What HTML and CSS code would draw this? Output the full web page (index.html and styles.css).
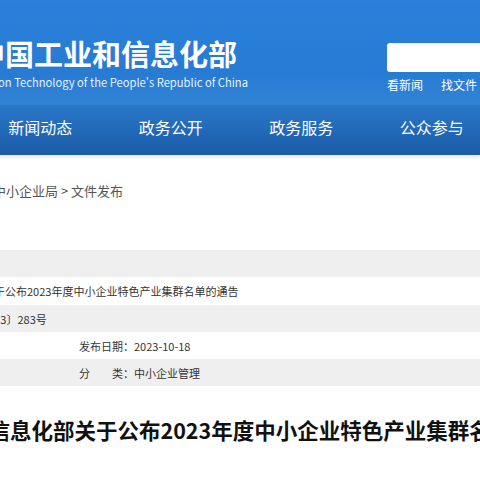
FILE: index.html
```html
<!DOCTYPE html>
<html lang="zh-CN">
<head>
<meta charset="UTF-8">
<meta name="viewport" content="width=device-width, initial-scale=1.0">
<title>工业和信息化部 - 文件发布</title>
<link rel="stylesheet" href="styles.css">
</head>
<body>
<div class="header">
  <div class="brand">
    <div class="brand-name">中国工业和信息化部</div>
    <div class="brand-en">Ministry of Industry and Information Technology of the People's Republic of China</div>
  </div>
  <div class="search">
    <div class="search-box"></div>
    <div class="search-links">
      <a href="#">看新闻</a>
      <a href="#">找文件</a>
    </div>
  </div>
</div>

<div class="nav">
  <a href="#">新闻动态</a>
  <a href="#">政务公开</a>
  <a href="#">政务服务</a>
  <a href="#">公众参与</a>
</div>

<div class="crumbs">首页 &gt; 中小企业局 &gt; 文件发布</div>

<!-- 文件信息 -->
<div class="info">
  <div class="row gray"></div>
  <div class="row"><span class="wide title-cut">关于公布2023年度中小企业特色产业集群名单的通告</span></div>
  <div class="row gray"><span class="wide num-cut">〔2023〕283号</span></div>
  <div class="row"><span class="label">发布日期：</span><span>2023-10-18</span></div>
  <div class="row gray"><span class="label">分　　类：</span><span>中小企业管理</span></div>
</div>

<h1 class="doc-title">工业和信息化部关于公布2023年度中小企业特色产业集群名单的通告</h1>
</body>
</html>
```

FILE: styles.css
```css
body {
  margin: 0;
  font-family: "Noto Sans CJK SC", "Noto Sans", sans-serif;
  background-color: #fff;
  overflow: hidden;
}
a {
  color: inherit;
  text-decoration: none;
}
.header {
  height: 105px;
  display: flex;
  justify-content: space-between;
  background: linear-gradient(180deg, #2a80da 0%, #277bd3 70%, #3183d4 100%);
  color: #fff;
}
.brand {
  width: 248px;
  padding-top: 37px;
  display: flex;
  flex-direction: column;
  white-space: nowrap;
}
.brand-name {
  margin-left: -24px;
  font-size: 29px;
  line-height: 32px;
  font-weight: bold;
}
.brand-en {
  align-self: flex-end;
  margin-top: 6px;
  font-size: 11.2px;
  line-height: 15px;
  color: #e8f1fb;
}
.search {
  width: 93px;
  padding-top: 43px;
}
.search-box {
  height: 29px;
  background-color: #fff;
  border-radius: 3px 0 0 3px;
}
.search-links {
  margin-top: 5px;
  display: flex;
  gap: 18px;
  font-size: 12px;
  line-height: 16px;
  white-space: nowrap;
}
.nav {
  height: 50px;
  display: grid;
  grid-template-columns: repeat(4, 130.5px);
  margin-left: -25px;
  align-items: center;
  background: linear-gradient(180deg, #2a78c8 0%, #2269b9 50%, #1b5ca6 100%);
  box-shadow: 0 2px 4px rgba(40, 100, 160, 0.15);
  position: relative;
}
.nav a {
  text-align: center;
  color: #fff;
  font-size: 16px;
  line-height: 20px;
  padding-bottom: 7px;
}
.crumbs {
  margin-top: 28px;
  margin-left: -46px;
  height: 67px;
  font-size: 13px;
  line-height: 16px;
  color: #555;
  white-space: nowrap;
}
.row {
  height: 27px;
  display: flex;
  align-items: center;
  font-size: 11px;
  color: #333;
  white-space: nowrap;
}
.row.gray {
  background-color: #efefef;
}
.info .row:nth-child(2) {
  height: 28px;
}
.label {
  margin-left: 79px;
}
.wide.title-cut {
  margin-left: -17px;
}
.wide.num-cut {
  margin-left: -29px;
}
.doc-title {
  margin: 30px 0 0 -76px;
  font-size: 21.5px;
  line-height: 28px;
  font-weight: bold;
  color: #111;
  white-space: nowrap;
}
```
